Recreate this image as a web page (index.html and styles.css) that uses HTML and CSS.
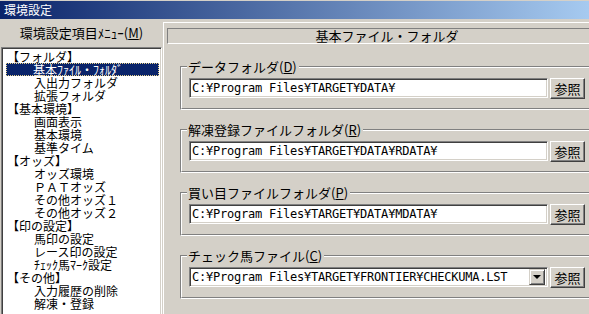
FILE: index.html
```html
<!DOCTYPE html>
<html>
<head>
    <meta charset="utf-8">
    <title>環境設定</title>
    <link rel="stylesheet" href="styles.css">
</head>
<body>
    <div class="window">
        <div class="titlebar">環境設定</div>
        <div class="client">
            <div class="menu-pane">
                <div class="menu-label">環境設定項目ﾒﾆｭｰ(<u>M</u>)</div>
                <ul class="menu-list">
                    <li class="group-item">【フォルダ】</li>
                    <li class="sub-item selected">基本ﾌｧｲﾙ・ﾌｫﾙﾀﾞ</li>
                    <li class="sub-item">入出力フォルダ</li>
                    <li class="sub-item">拡張フォルダ</li>
                    <li class="group-item">【基本環境】</li>
                    <li class="sub-item">画面表示</li>
                    <li class="sub-item">基本環境</li>
                    <li class="sub-item">基準タイム</li>
                    <li class="group-item">【オッズ】</li>
                    <li class="sub-item">オッズ環境</li>
                    <li class="sub-item">ＰＡＴオッズ</li>
                    <li class="sub-item">その他オッズ１</li>
                    <li class="sub-item">その他オッズ２</li>
                    <li class="group-item">【印の設定】</li>
                    <li class="sub-item">馬印の設定</li>
                    <li class="sub-item">レース印の設定</li>
                    <li class="sub-item">ﾁｪｯｸ馬ﾏｰｸ設定</li>
                    <li class="group-item">【その他】</li>
                    <li class="sub-item">入力履歴の削除</li>
                    <li class="sub-item">解凍・登録</li>
                </ul>
            </div>

            <div class="settings-pane">
                <div class="pane-title">基本ファイル・フォルダ</div>

                <div class="groupbox">
                    <span class="group-caption">データフォルダ(<u>D</u>)</span>
                    <div class="group-inner">
                        <div class="path-field">C:¥Program Files¥TARGET¥DATA¥</div>
                        <button class="browse-button">参照</button>
                    </div>
                </div>

                <div class="groupbox">
                    <span class="group-caption">解凍登録ファイルフォルダ(<u>R</u>)</span>
                    <div class="group-inner">
                        <div class="path-field">C:¥Program Files¥TARGET¥DATA¥RDATA¥</div>
                        <button class="browse-button">参照</button>
                    </div>
                </div>

                <div class="groupbox">
                    <span class="group-caption">買い目ファイルフォルダ(<u>P</u>)</span>
                    <div class="group-inner">
                        <div class="path-field">C:¥Program Files¥TARGET¥DATA¥MDATA¥</div>
                        <button class="browse-button">参照</button>
                    </div>
                </div>

                <div class="groupbox">
                    <span class="group-caption">チェック馬ファイル(<u>C</u>)</span>
                    <div class="group-inner">
                        <div class="path-field combo">
                            <span class="combo-text">C:¥Program Files¥TARGET¥FRONTIER¥CHECKUMA.LST</span>
                            <span class="combo-drop"><span class="drop-arrow"></span></span>
                        </div>
                        <button class="browse-button">参照</button>
                    </div>
                </div>
            </div>
        </div>
    </div>
</body>
</html>
```

FILE: styles.css
```css
html, body {
    margin: 0;
    padding: 0;
}

body {
    width: 589px;
    height: 314px;
    overflow: hidden;
    background-color: #d4d0c8;
    font-family: "Noto Sans CJK JP", sans-serif;
    color: #000;
}

.window {
    width: 589px;
    height: 314px;
    overflow: hidden;
}

.titlebar {
    height: 18px;
    border-top: 1px solid #d4d0c8;
    padding-left: 4px;
    background: linear-gradient(to right, #0a246a, #a6caf0);
    color: #fff;
    font-size: 12px;
    line-height: 18px;
}

.client {
    display: flex;
}

.menu-pane {
    width: 163px;
    flex-shrink: 0;
}

.menu-label {
    height: 28px;
    line-height: 28px;
    text-align: center;
    font-size: 13px;
}

.menu-list {
    list-style: none;
    margin: 0 0 0 1px;
    padding: 2px 2px 0 2px;
    width: 155px;
    height: 270px;
    overflow: hidden;
    background-color: #fff;
    border-top: 1px solid #808080;
    border-left: 1px solid #808080;
    border-bottom: 1px solid #fff;
    border-right: 1px solid #fff;
    box-shadow: inset 1px 1px 0 #404040, inset -1px -1px 0 #d4d0c8;
    font-size: 12px;
}

.menu-list li {
    height: 13px;
    line-height: 13px;
    white-space: nowrap;
}

.group-item {
    padding-left: 3px;
}

.sub-item {
    padding-left: 30px;
}

.sub-item.selected {
    margin-left: 2px;
    padding-left: 27px;
    background-color: #0a246a;
    color: #fff;
    outline: 1px dotted #e8d28a;
    outline-offset: -1px;
}

.settings-pane {
    width: 470px;
    flex-shrink: 0;
    margin-top: 3px;
    border-top: 1px solid #fff;
    border-left: 1px solid #fff;
    height: 300px;
}

.pane-title {
    box-sizing: border-box;
    width: 440px;
    height: 16px;
    margin: 5px 0 0 3px;
    border-top: 1px solid #808080;
    border-left: 1px solid #808080;
    border-bottom: 1px solid #fff;
    border-right: 1px solid #fff;
    font-size: 13px;
    line-height: 14px;
    text-align: center;
}

.groupbox {
    position: relative;
    box-sizing: border-box;
    width: 424px;
    height: 44px;
    margin: 19px 0 0 16px;
    border-top: 1px solid #808080;
    border-left: 1px solid #808080;
    border-bottom: 1px solid #fff;
    border-right: 1px solid #fff;
}

.pane-title + .groupbox {
    margin-top: 22px;
}

.group-inner {
    box-sizing: border-box;
    height: 100%;
    display: flex;
    gap: 2px;
    align-items: flex-start;
    padding: 10px 0 0 7px;
    border-top: 1px solid #fff;
    border-left: 1px solid #fff;
    border-bottom: 1px solid #808080;
    border-right: 1px solid #808080;
}

.group-caption {
    position: absolute;
    top: -8px;
    left: 6px;
    padding: 0 2px 0 1px;
    background-color: #d4d0c8;
    font-size: 13px;
    line-height: 15px;
    white-space: nowrap;
}

.path-field {
    box-sizing: border-box;
    width: 359px;
    height: 20px;
    padding-left: 2px;
    background-color: #fff;
    border-top: 1px solid #808080;
    border-left: 1px solid #808080;
    border-bottom: 1px solid #fff;
    border-right: 1px solid #fff;
    box-shadow: inset 1px 1px 0 #404040, inset -1px -1px 0 #d4d0c8;
    font-family: "DejaVu Sans Mono", "Liberation Mono", monospace;
    font-size: 12px;
    letter-spacing: -0.22px;
    line-height: 18px;
    white-space: nowrap;
}

.combo {
    display: flex;
    align-items: center;
    padding-right: 2px;
}

.combo-text {
    flex: 1;
}

.combo-drop {
    box-sizing: border-box;
    width: 16px;
    height: 16px;
    display: flex;
    align-items: center;
    justify-content: center;
    background-color: #d4d0c8;
    border-top: 1px solid #d4d0c8;
    border-left: 1px solid #d4d0c8;
    border-bottom: 1px solid #404040;
    border-right: 1px solid #404040;
    box-shadow: inset 1px 1px 0 #fff, inset -1px -1px 0 #808080;
}

.drop-arrow {
    width: 0;
    height: 0;
    border-left: 4px solid transparent;
    border-right: 4px solid transparent;
    border-top: 4px solid #000;
}

.browse-button {
    box-sizing: border-box;
    width: 35px;
    height: 21px;
    padding: 0;
    background-color: #d4d0c8;
    border-top: 1px solid #fff;
    border-left: 1px solid #fff;
    border-bottom: 1px solid #404040;
    border-right: 1px solid #404040;
    box-shadow: inset -1px -1px 0 #808080;
    font-family: "Noto Sans CJK JP", sans-serif;
    font-size: 13px;
    line-height: 18px;
    color: #000;
}
```
